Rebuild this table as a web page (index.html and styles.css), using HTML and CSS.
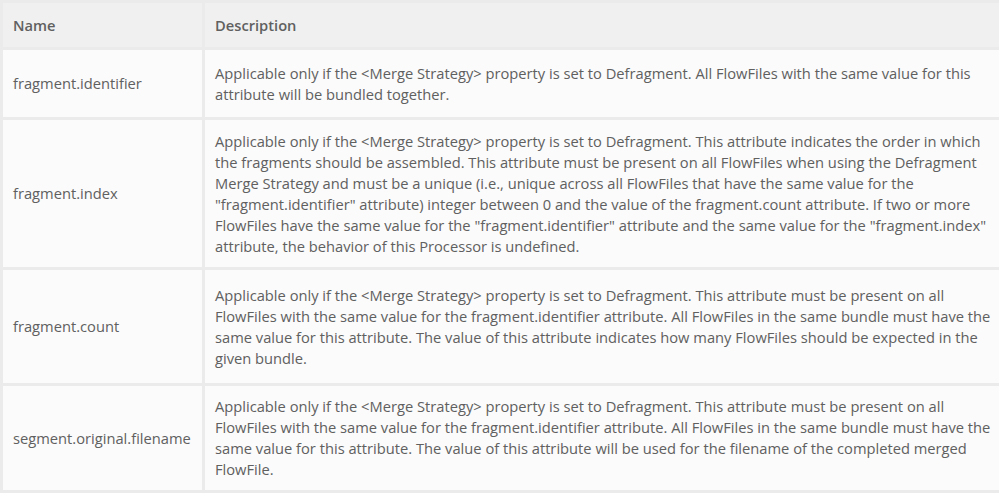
FILE: index.html
```html
<!DOCTYPE html>
<html>
<head>
<meta charset="utf-8">
<link rel="stylesheet" href="styles.css">
</head>
<body>
<table class="attrs">
  <thead>
    <tr class="head-row"><th class="name">Name</th><th class="desc">Description</th></tr>
  </thead>
  <tbody>
    <tr class="row-1">
      <td class="name">fragment.identifier</td>
      <td class="desc">Applicable only if the &lt;Merge Strategy&gt; property is set to Defragment. All FlowFiles with the same value for this attribute will be bundled together.</td>
    </tr>
    <tr class="row-2">
      <td class="name">fragment.index</td>
      <td class="desc">Applicable only if the &lt;Merge Strategy&gt; property is set to Defragment. This attribute indicates the order in which the fragments should be assembled. This attribute must be present on all FlowFiles when using the Defragment Merge Strategy and must be a unique (i.e., unique across all FlowFiles that have the same value for the "fragment.identifier" attribute) integer between 0 and the value of the fragment.count attribute. If two or more FlowFiles have the same value for the "fragment.identifier" attribute and the same value for the "fragment.index" attribute, the behavior of this Processor is undefined.</td>
    </tr>
    <tr class="row-3">
      <td class="name">fragment.count</td>
      <td class="desc">Applicable only if the &lt;Merge Strategy&gt; property is set to Defragment. This attribute must be present on all FlowFiles with the same value for the fragment.identifier attribute. All FlowFiles in the same bundle must have the same value for this attribute. The value of this attribute indicates how many FlowFiles should be expected in the given bundle.</td>
    </tr>
    <tr class="row-4">
      <td class="name">segment.original.filename</td>
      <td class="desc">Applicable only if the &lt;Merge Strategy&gt; property is set to Defragment. This attribute must be present on all FlowFiles with the same value for the fragment.identifier attribute. All FlowFiles in the same bundle must have the same value for this attribute. The value of this attribute will be used for the filename of the completed merged FlowFile.</td>
    </tr>
  </tbody>
</table>
</body>
</html>
```
FILE: styles.css
```css
html, body {
  margin: 0;
  padding: 0;
  background: #ffffff;
  overflow: hidden;
}
.attrs {
  border-collapse: collapse;
  width: 1006px;
  table-layout: fixed;
  font-family: "Open Sans", "Liberation Sans", sans-serif;
  font-size: 14.7px;
  line-height: 21px;
  color: #606060;
}
.attrs th, .attrs td {
  border: 3px solid #ebebeb;
  text-align: left;
  vertical-align: middle;
  padding: 10px 10px;
}
.attrs th {
  background: #f0f0f0;
  font-weight: 600;
  height: 44px;
  padding-top: 0;
  padding-bottom: 0;
}
.attrs td {
  background: #fbfbfb;
}
.attrs .name {
  width: 179px;
}
.row-1 td { height: 47px; }
.row-2 td { height: 127px; }
.row-3 td { height: 93px; }
.row-4 td { height: 84px; }
```
